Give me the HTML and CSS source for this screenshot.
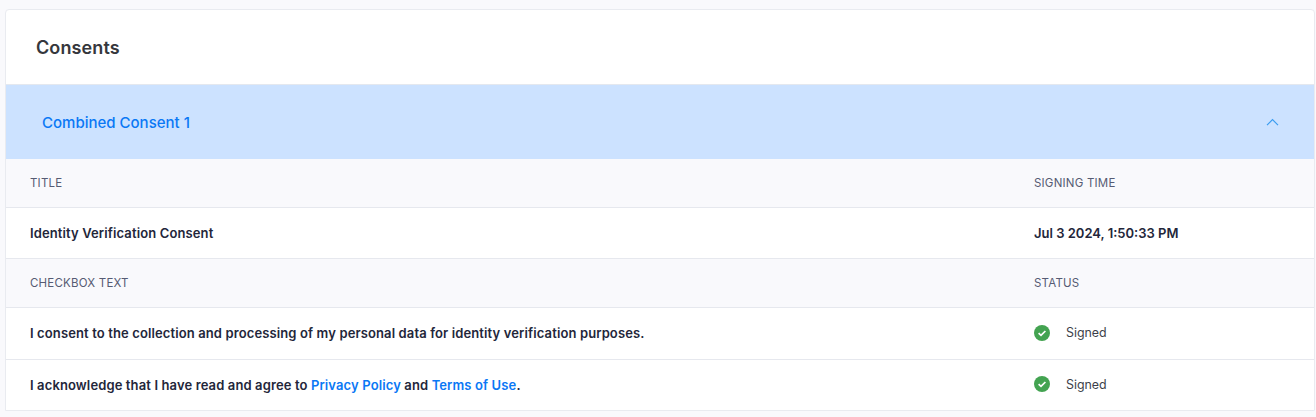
FILE: index.html
```html
<!DOCTYPE html>
<html lang="en">
<head>
<meta charset="utf-8">
<title>Consents</title>
<link rel="stylesheet" href="styles.css">
</head>
<body>
<section class="card">
  <header class="card-header"><h1 class="card-title">Consents</h1></header>
  <div class="accordion">
    <span class="accordion-title">Combined Consent 1</span>
    <svg class="chevron" width="14" height="8" viewBox="0 0 14 8" aria-hidden="true"><path d="M1 7.2 6.5 1.6l5.5 5.6" fill="none" stroke="#3b9df0" stroke-width="1.2"/></svg>
  </div>
  <div class="row head"><div class="cell">TITLE</div><div class="cell">SIGNING TIME</div></div>
  <div class="row body r-title"><div class="cell strong wide">Identity Verification Consent</div><div class="cell strong">Jul 3 2024, 1:50:33 PM</div></div>
  <div class="row head"><div class="cell">CHECKBOX TEXT</div><div class="cell">STATUS</div></div>
  <div class="row body r-a">
    <div class="cell strong wide raised">I consent to the collection and processing of my personal data for identity verification purposes.</div>
    <div class="cell status">
      <svg class="check" width="16" height="16" viewBox="0 0 16 16" aria-hidden="true"><circle cx="8" cy="8" r="8" fill="#43a351"/><path d="M4.6 8.2 7 10.4l4.4-4.4" fill="none" stroke="#fff" stroke-width="1.7"/></svg>
      <span>Signed</span>
    </div>
  </div>
  <div class="row body r-b">
    <div class="cell strong wide">I acknowledge that I have read and agree to <a href="#">Privacy Policy</a> and <a href="#">Terms of Use</a>.</div>
    <div class="cell status">
      <svg class="check" width="16" height="16" viewBox="0 0 16 16" aria-hidden="true"><circle cx="8" cy="8" r="8" fill="#43a351"/><path d="M4.6 8.2 7 10.4l4.4-4.4" fill="none" stroke="#fff" stroke-width="1.7"/></svg>
      <span>Signed</span>
    </div>
  </div>
</section>
</body>
</html>
```
FILE: styles.css
```css
* { box-sizing: border-box; }
html, body { height: 100%; }
body {
  margin: 0;
  padding: 9px 1px 0 5px;
  background: #f9f9fc;
  font-family: "Inter", "Liberation Sans", sans-serif;
  overflow: hidden;
}
.card {
  background: #fff;
  border: 1px solid #e9ebf0;
  border-radius: 4px 4px 0 0;
  height: 402px;
  overflow: hidden;
}
.card-header {
  height: 75px;
  display: flex;
  align-items: center;
  padding-left: 30px;
  border-bottom: 1px solid #e4e8ef;
}
.card-title {
  margin: 0;
  font-size: 18px;
  font-weight: 600;
  letter-spacing: 0.1px;
  color: #35373c;
}
.accordion {
  height: 74px;
  background: #cce2ff;
  display: flex;
  align-items: center;
  justify-content: space-between;
  padding: 0 34px 0 36px;
}
.accordion-title {
  font-size: 15px;
  font-weight: 500;
  color: #0a78f5;
}
.row {
  display: grid;
  grid-template-columns: 1fr 280px;
  align-items: center;
  padding-left: 24px;
  border-bottom: 1px solid #e6e8ee;
}
.row:last-child { border-bottom: 0; }
.head {
  height: 49px;
  background: #f9f9fc;
  font-size: 11.5px;
  letter-spacing: 0.2px;
  color: #565b73;
}
.body { background: #fff; }
.r-title { height: 51px; }
.r-a { height: 52px; }
.r-b { height: 50px; }
.strong {
  font-size: 13px;
  font-weight: 600;
  color: #23263a;
}
.wide { letter-spacing: 0.12px; }
.raised { padding-bottom: 2px; }
.strong a { color: #0a78f5; text-decoration: none; }
.status {
  display: flex;
  align-items: center;
  gap: 16px;
  padding-bottom: 2px;
  font-size: 12.4px;
  color: #3c3f4a;
}
.check { flex: none; }
```
